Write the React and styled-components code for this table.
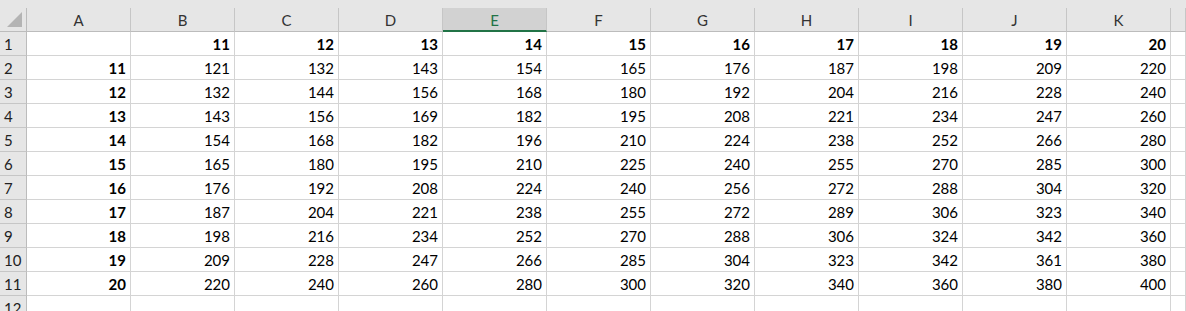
import React from 'react'
import styled, { createGlobalStyle } from 'styled-components'

const GlobalStyle = createGlobalStyle`
  html, body {
    margin: 0;
    padding: 0;
    background: #fff;
    overflow: hidden;
  }
  body {
    font-family: Lato, "Open Sans", "Liberation Sans", sans-serif;
  }
`

const COLS = ['A', 'B', 'C', 'D', 'E', 'F', 'G', 'H', 'I', 'J', 'K']
const NUMS = [11, 12, 13, 14, 15, 16, 17, 18, 19, 20]

const Window = styled.div`
  width: 1186px;
  height: 311px;
  overflow: hidden;
  background: #fff;
`
const TopStrip = styled.div`
  height: 8px;
  background: #e6e6e6;
`
const Sheet = styled.div`
  display: grid;
  grid-template-columns: 27px repeat(11, 104px) 1fr;
  grid-auto-rows: 24px;
`
const Corner = styled.div`
  background: #e6e6e6;
  border-right: 1px solid #bcbcbc;
  border-bottom: 1px solid #bcbcbc;
  display: flex;
  align-items: flex-end;
  justify-content: flex-end;
  padding: 0 4px 4px 0;
  box-sizing: border-box;
`
const ColHeader = styled.div`
  box-sizing: border-box;
  background: ${p => (p.selected ? '#d2d2d2' : '#e6e6e6')};
  border-right: 1px solid #c6c6c6;
  border-bottom: ${p => (p.selected ? '2px solid #217346' : '1px solid #bcbcbc')};
  color: ${p => (p.selected ? '#217346' : '#333')};
  font-size: 15px;
  display: flex;
  align-items: center;
  justify-content: center;
  padding-top: ${p => (p.selected ? '1px' : '0')};
`
const RowHeader = styled.div`
  box-sizing: border-box;
  background: #e6e6e6;
  border-right: 1px solid #bcbcbc;
  border-bottom: 1px solid #c6c6c6;
  color: #222;
  font-size: 15px;
  display: flex;
  align-items: center;
  padding-left: 4px;
`
const Cell = styled.div`
  box-sizing: border-box;
  border-right: 1px solid #d4d4d4;
  border-bottom: 1px solid #d4d4d4;
  color: #000;
  font-size: 15px;
  font-weight: ${p => (p.bold ? 700 : 400)};
  display: flex;
  align-items: center;
  justify-content: flex-end;
  padding: 1px 4px 0 0;
`

const CornerMark = () => (
  <svg width="15" height="15" viewBox="0 0 15 15">
    <polygon points="15,0 15,15 0,15" fill="#b4b4b4" />
  </svg>
)

// null = title row (bold column numbers), undefined = trailing empty row
const rows = [null, ...NUMS, undefined]

const App = () => (
  <Window>
    <GlobalStyle />
    <TopStrip />
    <Sheet>
      <Corner><CornerMark /></Corner>
      {COLS.map(c => <ColHeader key={c} selected={c === 'E'}>{c}</ColHeader>)}
      <ColHeader />
      {rows.map((r, i) => (
        <React.Fragment key={i}>
          <RowHeader>{i + 1}</RowHeader>
          <Cell bold>{r === null ? '' : r}</Cell>
          {NUMS.map(n => (
            <Cell key={n} bold={r === null}>
              {r === null ? n : r === undefined ? '' : r * n}
            </Cell>
          ))}
          <Cell />
        </React.Fragment>
      ))}
    </Sheet>
  </Window>
)

export default App
